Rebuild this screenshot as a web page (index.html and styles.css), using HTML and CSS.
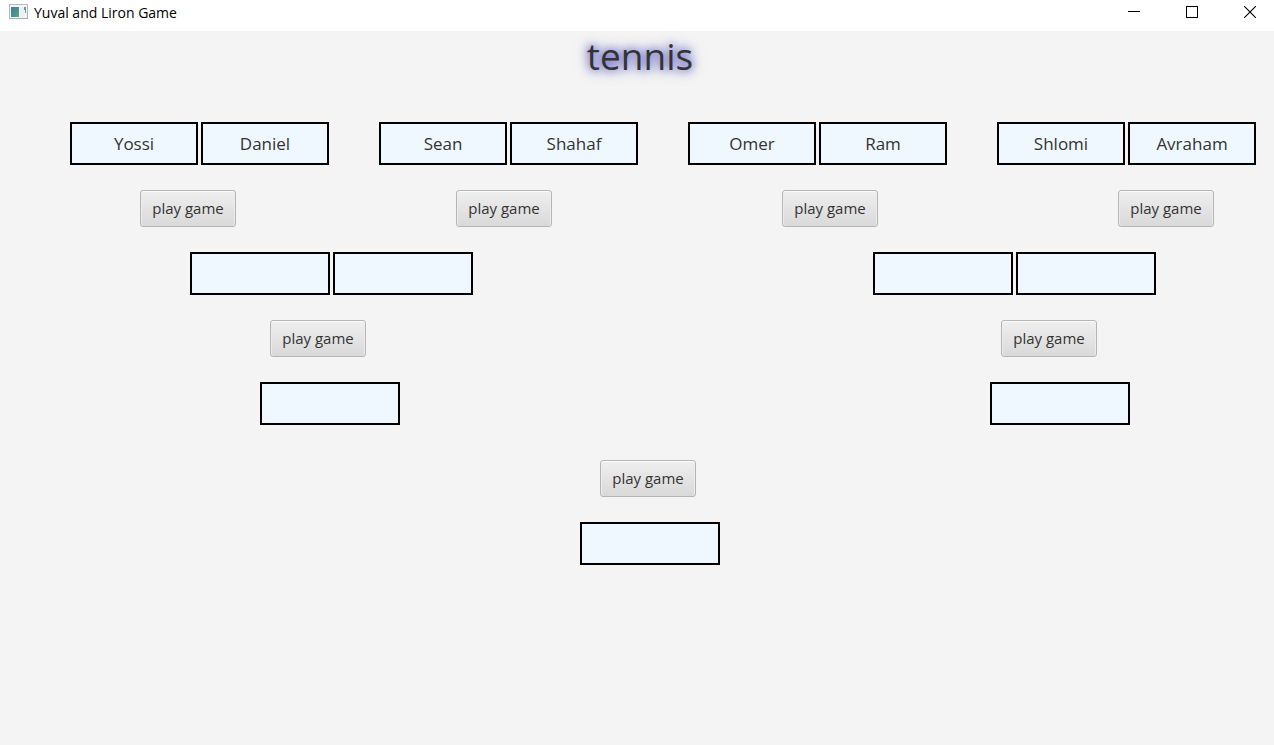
FILE: index.html
```html
<!DOCTYPE html>
<html lang="en">
<head>
<meta charset="utf-8">
<title>Yuval and Liron Game</title>
<link rel="stylesheet" href="styles.css">
</head>
<body>
<header class="titlebar">
  <svg class="app-icon" width="20" height="16" viewBox="0 0 20 16" aria-hidden="true">
    <defs><linearGradient id="pane" x1="0" y1="0" x2="1" y2="1"><stop offset="0" stop-color="#3f79a6"/><stop offset="1" stop-color="#55a878"/></linearGradient></defs>
    <rect x=".5" y=".5" width="18" height="14" fill="#f5f6f7" stroke="#b4b8bf"/>
    <rect x="1" y="14" width="18" height="1" fill="#a9adb5"/>
    <rect x="2" y="3" width="8" height="10" fill="url(#pane)"/>
    <rect x="11" y="3" width="4" height="10" fill="#eceef1"/>
    <path d="M15 3h2v6h-1V6h-1z" fill="#5da387"/>
  </svg>
  <span class="caption">Yuval and Liron Game</span>
  <div class="window-controls">
    <button class="control" aria-label="Minimize"><svg width="12" height="12" viewBox="0 0 12 12" shape-rendering="crispEdges"><path d="M0 5.5h12" stroke="#000"/></svg></button>
    <button class="control" aria-label="Maximize"><svg width="12" height="12" viewBox="0 0 12 12"><rect x=".5" y=".5" width="11" height="11" fill="none" stroke="#000"/></svg></button>
    <button class="control" aria-label="Close"><svg width="12" height="12" viewBox="0 0 12 12"><path d="M0 0l12 12M12 0L0 12" stroke="#000" stroke-width="1.1"/></svg></button>
  </div>
</header>
<main class="board">
  <h1 class="title">tennis</h1>
  <div class="row players">
    <div class="pair"><div class="slot named">Yossi</div><div class="slot named">Daniel</div></div>
    <div class="pair"><div class="slot named">Sean</div><div class="slot named">Shahaf</div></div>
    <div class="pair"><div class="slot named">Omer</div><div class="slot named">Ram</div></div>
    <div class="pair"><div class="slot named">Shlomi</div><div class="slot named">Avraham</div></div>
  </div>
  <div class="quarter-games">
    <button class="play">play game</button>
    <button class="play">play game</button>
    <button class="play">play game</button>
    <button class="play">play game</button>
  </div>
  <div class="row semifinalists">
    <div class="pair"><div class="slot"></div><div class="slot"></div></div>
    <div class="pair"><div class="slot"></div><div class="slot"></div></div>
  </div>
  <div class="row semi-games">
    <button class="play">play game</button>
    <button class="play">play game</button>
  </div>
  <div class="row finalists">
    <div class="slot"></div>
    <div class="slot"></div>
  </div>
  <div class="row final-game">
    <button class="play">play game</button>
  </div>
  <div class="row champion">
    <div class="slot"></div>
  </div>
</main>
</body>
</html>
```
FILE: styles.css
```css
* { box-sizing: border-box; }

body {
  margin: 0;
  min-height: 100vh;
  background: #f4f4f4;
  color: #333;
  font-family: "Open Sans", "Noto Sans", sans-serif;
  font-size: 16px;
}

.titlebar {
  display: flex;
  align-items: flex-start;
  height: 31px;
  padding-left: 9px;
  background: #fff;
  color: #000;
}

.app-icon { margin-top: 4px; }

.caption {
  margin-left: 5px;
  font-size: 14px;
  line-height: 26px;
}

.window-controls {
  display: flex;
  margin-left: auto;
}

.control {
  display: flex;
  align-items: center;
  justify-content: center;
  width: 58px;
  height: 24px;
  padding: 0;
  border: 0;
  background: none;
}

.control:last-child {
  justify-content: flex-end;
  width: 53px;
  padding-right: 18px;
}

.board {
  display: flex;
  flex-direction: column;
  gap: 25px;
}

.title {
  margin: 0 0 16px;
  padding-left: 6px;
  font-size: 37px;
  font-weight: 400;
  line-height: 50px;
  text-align: center;
  text-shadow: 0 0 8px rgba(0, 0, 160, 0.6), 0 0 14px rgba(0, 0, 160, 0.6);
}

.row {
  display: flex;
  justify-content: space-between;
}

.players { padding: 0 18px 0 70px; }
.semifinalists { padding: 0 118px 0 190px; }
.semi-games { padding: 0 177px 0 270px; }
.finalists { padding: 0 144px 0 260px; }

.final-game {
  justify-content: center;
  margin-top: 10px;
  padding-left: 22px;
}

.champion {
  justify-content: center;
  padding-left: 26px;
}

.quarter-games {
  display: grid;
  grid-template-columns: 316fr 326fr 336fr auto;
  justify-items: start;
  padding: 0 60px 0 140px;
}

.pair {
  display: flex;
  gap: 3px;
}

.slot {
  width: 140px;
  height: 43px;
  border: 2px solid #000;
  background: #f0f8ff;
  font-size: 17px;
  line-height: 39px;
  text-align: center;
}

.named { width: 128px; }

.play {
  width: 96px;
  height: 37px;
  padding: 0 0 2px;
  border: 1px solid #b5b5b5;
  border-radius: 3px;
  background: linear-gradient(#efefef, #d9d9d9);
  box-shadow: inset 0 1px #fcfcfc, inset 1px 0 #ececec, inset -1px 0 #ececec;
  color: #333;
  font-family: inherit;
  font-size: 15px;
}
```
